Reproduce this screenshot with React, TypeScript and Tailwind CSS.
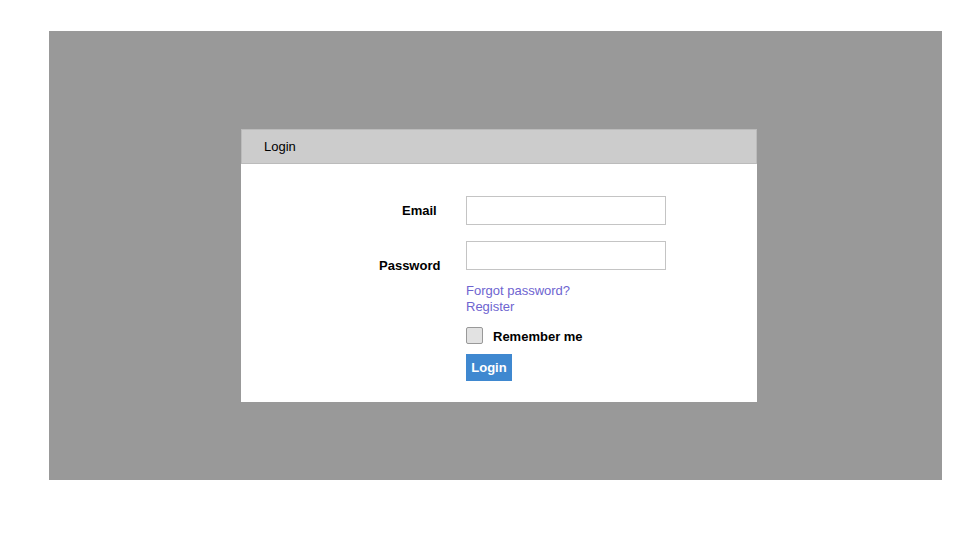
export default function App() {
  return (
    <div className="min-h-screen bg-white pl-[49px] pt-[31px] font-['Liberation_Sans',Arial,sans-serif] text-[13px] text-black">
      <div className="w-[893px] h-[449px] bg-[#999999] pl-[192px] pt-[98px]">
        <div className="w-[516px] h-[273px] bg-white">
          {/* Header */}
          <div className="h-[35px] bg-[#cccccc] border border-[#bbbbbb] flex items-center pl-[22px]">
            Login
          </div>

          {/* Form */}
          <div className="flex pt-[32px]">
            <div className="w-[225px] relative font-bold">
              <div className="absolute left-[161px] top-[5px]">Email</div>
              <div className="absolute left-[138px] top-[60px]">Password</div>
            </div>
            <div className="flex flex-col">
              <input type="text" className="w-[200px] h-[29px] border border-[#c4c4c4] bg-white outline-none" />
              <input type="password" className="w-[200px] h-[29px] border border-[#c4c4c4] bg-white outline-none mt-[16px]" />
              <a href="#" className="text-[#6e64d0] leading-[16px] mt-[13px]">Forgot password?</a>
              <a href="#" className="text-[#6e64d0] leading-[16px]">Register</a>
              <label className="flex items-center mt-[12px] font-bold leading-[17px]">
                <span className="w-[17px] h-[17px] border border-[#999999] bg-[#e2e2e2] rounded-[2px]" />
                <span className="ml-[10px] relative top-[1px]">Remember me</span>
              </label>
              <button className="mt-[10px] w-[46px] h-[27px] bg-[#3f88d0] text-white font-bold flex items-center justify-center">
                Login
              </button>
            </div>
          </div>
        </div>
      </div>
    </div>
  );
}
